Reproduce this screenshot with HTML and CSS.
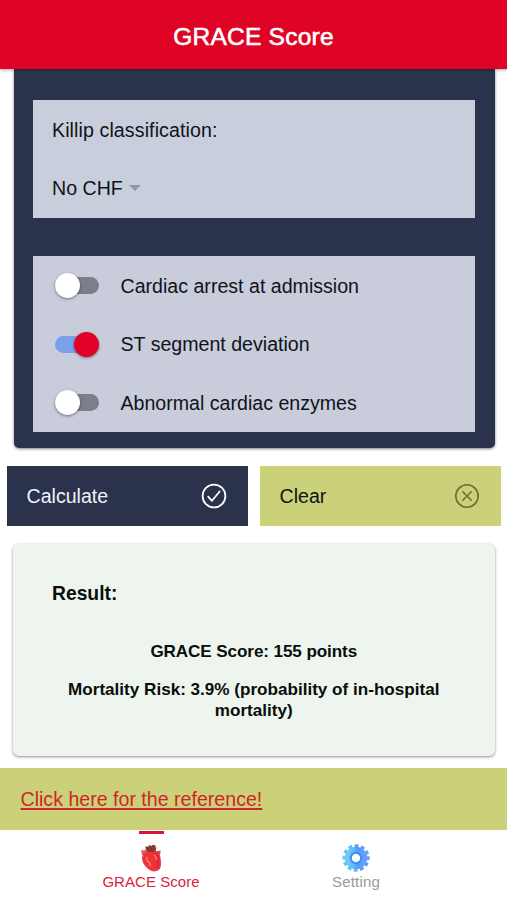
FILE: index.html
```html
<!DOCTYPE html>
<html lang="en">
<head>
<meta charset="utf-8">
<title>GRACE Score</title>
<link rel="stylesheet" href="styles.css">
</head>
<body>
<header class="header"><h1>GRACE Score</h1></header>
<main class="content">
  <section class="form-card">
    <div class="panel killip">
      <div class="row classification">Killip classification:</div>
      <div class="row">No CHF <span class="caret"></span></div>
    </div>
    <div class="panel options">
      <div class="row"><span class="toggle"><span class="knob"></span></span><span class="label">Cardiac arrest at admission</span></div>
      <div class="row"><span class="toggle on"><span class="knob"></span></span><span class="label">ST segment deviation</span></div>
      <div class="row"><span class="toggle"><span class="knob"></span></span><span class="label">Abnormal cardiac enzymes</span></div>
    </div>
  </section>
  <div class="actions">
    <div class="button calculate"><span>Calculate</span>
      <svg class="action-icon" viewBox="0 0 26 26" fill="none" stroke="#fff" stroke-width="1.8"><circle cx="13" cy="13" r="11.4"/><path d="M7.2 13.6l3.8 4.2 7.6-9.3" stroke-linecap="round" stroke-linejoin="round"/></svg>
    </div>
    <div class="button clear"><span>Clear</span>
      <svg class="action-icon" viewBox="0 0 26 26" fill="none" stroke="#687034" stroke-width="1.6"><circle cx="13" cy="13" r="11.2"/><path d="M8.8 8.8l8.4 8.4m0-8.4l-8.4 8.4" stroke-linecap="round"/></svg>
    </div>
  </div>
  <section class="result-card">
    <h2>Result:</h2>
    <p class="score">GRACE Score: 155 points</p>
    <p class="risk">Mortality Risk: 3.9% (probability of in-hospital<br>mortality)</p>
  </section>
  <div class="reference"><a href="#">Click here for the reference!</a></div>
</main>
<nav class="tabs">
  <div class="tab active">
    <svg class="tab-icon" viewBox="0 0 28 28">
      <path d="M9 9L8.5 2l2.7 1 .7-2 3 1 .6-1.2 3.2.8-.3 1.8 1 .1L18 10z" fill="#88372f"/>
      <path d="M4 6.5l5-.5 3 3-3 4-4-2z" fill="#df626a"/>
      <path d="M18 7.5l5.5-1v3l-2.5 2z" fill="#cf4d58"/>
      <path d="M9 8c3-1 4 1 6 0s6-1 7 1c2 3 2.4 11 1.6 14-1 4-6 5.4-9.600 3.700C8.500 24 3.500 17 5.500 12 6 10 7.500 8.500 9 8z" fill="#f0343f"/>
      <path d="M15 9c2-2 5-1 6 1 1 3 2 9 1 13-1 1-3 2-4 1 2-5 2-11-3-15z" fill="#df2a3c"/>
      <path d="M9.500 13l.8 4 2.400 2 .8 3M17 10.500l2 2.500.5 3" fill="none" stroke="#f39a43" stroke-width="1.200"/>
    </svg>
    <span>GRACE Score</span>
  </div>
  <div class="tab">
    <svg class="tab-icon" viewBox="0 0 28 28">
      <defs><linearGradient id="blue"><stop stop-color="#6fcaf4"/><stop offset=".46" stop-color="#58b5f5"/><stop offset=".54" stop-color="#519cf7"/><stop offset="1" stop-color="#659ffb"/></linearGradient></defs>
      <circle cx="14" cy="14" r="7.700" fill="none" stroke="url(#blue)" stroke-width="7.200"/>
      <circle cx="14" cy="14" r="12.200" fill="none" stroke="url(#blue)" stroke-width="3" stroke-dasharray="3.800 2.588" transform="rotate(-8 14 14)"/>
      <circle cx="14" cy="14" r="5.300" fill="none" stroke="#438df0" stroke-width="1.800"/>
    </svg>
    <span>Setting</span>
  </div>
</nav>
</body>
</html>
```

FILE: styles.css
```css
* { box-sizing: border-box; }
body {
  margin: 0;
  height: 900px;
  overflow: hidden;
  display: flex;
  flex-direction: column;
  background: #fff;
  color: #10131a;
  font: 19.6px/24px "Liberation Sans", Arial, sans-serif;
}
h1, h2, p { margin: 0; }
.header {
  position: relative;
  z-index: 1;
  flex: none;
  height: 69px;
  padding-top: 4px;
  display: flex;
  align-items: center;
  justify-content: center;
  background: #df0325;
  color: #fff;
  box-shadow: 0 1px 3px rgba(0, 0, 0, .35);
}
.header h1 { font-size: 24.5px; font-weight: 400; -webkit-text-stroke: .6px #fff; letter-spacing: .25px; }
.form-card {
  height: 379px;
  margin: 0 12.5px 0 13.5px;
  padding: 31px 19.5px 0;
  background: #2b324b;
  border-radius: 0 0 5px 5px;
  box-shadow: 0 1px 3px rgba(0, 0, 0, .5);
}
.panel { background: #c8cedc; }
.killip { height: 118px; padding-left: 19px; }
.options { height: 176px; margin-top: 38px; padding-left: 22px; background: #c9ccdb; }
.row { height: 58.6px; padding-top: 1px; display: flex; align-items: center; }
.classification { padding-top: 2px; letter-spacing: .1px; }
.caret { margin-left: 6px; border: 6px solid transparent; border-top: 6.5px solid #8f97a5; border-bottom: 0; }
.toggle { width: 44px; height: 17px; margin-right: 21.5px; display: flex; align-items: center; border-radius: 9px; background: #7b7f8b; }
.knob { width: 25px; height: 25px; flex: none; border-radius: 50%; background: #fff; box-shadow: 0 1px 3px rgba(0, 0, 0, .45); }
.toggle.on { justify-content: flex-end; background: #7c9feb; }
.on .knob { background: #e20026; }
.actions { display: grid; grid-template-columns: 241px 241px; gap: 12px; padding: 18px 0 0 7px; }
.button { height: 60px; padding: 0 21px 0 19.5px; display: flex; align-items: center; justify-content: space-between; }
.calculate { background: #2b324b; color: #f1f3fa; }
.clear { background: #cbd178; }
.action-icon { width: 26px; height: 26px; }
.result-card {
  height: 212px;
  margin: 18px 12.5px 0 13px;
  padding: 37px 20px 0;
  color: #080e0a;
  background: #eef5ef;
  border-radius: 6px;
  box-shadow: 0 1px 3px rgba(0, 0, 0, .45);
}
.result-card h2 { padding-left: 19px; font-size: 19.3px; line-height: 26px; }
.result-card p { font-size: 17.1px; line-height: 21px; font-weight: 700; text-align: center; }
.result-card .score { margin-top: 33.5px; letter-spacing: -.1px; }
.result-card .risk { margin-top: 17px; }
.reference { height: 62px; margin-top: 12.3px; padding-left: 20.5px; display: flex; align-items: center; background: #cbd178; }
.reference a { color: #d0242b; text-decoration-thickness: 1.5px; text-underline-offset: 2px; }
.tabs { flex: 1; display: grid; grid-template-columns: 205px 205px; padding: .7px 0 0 48.5px; background: #fff; }
.tab { display: flex; flex-direction: column; align-items: center; padding-top: 13.5px; color: #999; font-size: 15px; line-height: 18px; letter-spacing: .2px; }
.tab.active { padding-top: 0; color: #d91f3b; letter-spacing: .05px; }
.tab.active::before { content: ""; width: 25px; height: 3px; margin-bottom: 10.5px; background: #d3183a; }
.tab-icon { width: 28px; height: 28px; margin-bottom: 1px; }
```
